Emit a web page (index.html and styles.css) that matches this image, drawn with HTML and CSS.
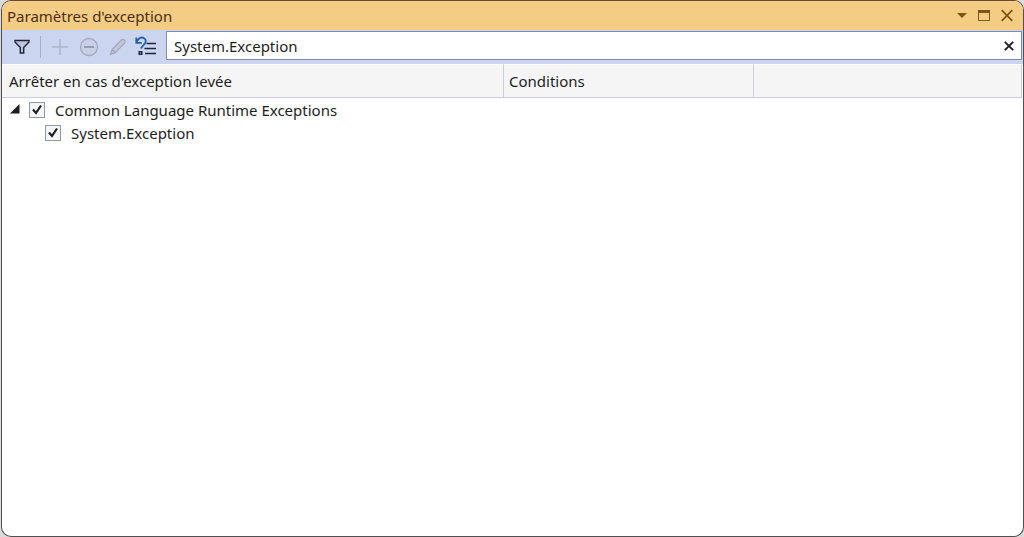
FILE: index.html
```html
<!DOCTYPE html>
<html lang="fr">
<head>
<meta charset="utf-8">
<title>Paramètres d'exception</title>
<link rel="stylesheet" href="styles.css">
</head>
<body>
<main class="window">
  <header class="titlebar">
    <h1 class="title">Paramètres d'exception</h1>
    <div class="window-actions">
      <button type="button" aria-label="Options de la fenêtre"><svg width="10" height="14" viewBox="0 0 10 14"><path d="M0 4h10L5 9z" fill="#805313"/></svg></button>
      <button type="button" aria-label="Agrandir"><svg width="12" height="14" viewBox="0 0 12 14"><path d="M.5 1.500h11v10H.5z" fill="none" stroke="#805313"/><path d="M0 1h12v3H0z" fill="#805313"/></svg></button>
      <button type="button" aria-label="Fermer"><svg width="12" height="14" viewBox="0 0 12 14"><path d="M.7 1.200l10.600 10.600M11.300 1.200L.7 11.800" stroke="#805313" stroke-width="1.700"/></svg></button>
    </div>
  </header>
  <div class="toolbar">
    <div class="tools">
      <button type="button" aria-label="Filtrer"><svg width="16" height="16" viewBox="0 0 16 16"><path d="M1 1.500h14V3L9.700 8.500V14H6.300V8.500L1 3z" fill="#bfc5d8" stroke="#20233a" stroke-width="1.400"/></svg></button>
      <span class="separator"></span>
      <button type="button" aria-label="Ajouter" disabled><svg width="18" height="18" viewBox="0 0 18 18"><path d="M9 1v16M1 9h16" stroke="#adb5cb" stroke-width="1.500"/></svg></button>
      <button type="button" aria-label="Supprimer" disabled><svg width="20" height="20" viewBox="0 0 20 20"><circle cx="10" cy="10" r="8.500" fill="#c8d0e8" stroke="#a4abc0" stroke-width="1.300"/><path d="M5 10h10" stroke="#969db2" stroke-width="1.800"/></svg></button>
      <button type="button" aria-label="Modifier" disabled><svg width="18" height="18" viewBox="0 0 18 18"><path d="M1.500 16.500l1.600-5L12.500 2c2-1.600 4.500.8 3.200 3L6.300 14.600zM3.100 11.500l3.200 3.100" fill="#c0c8df" stroke="#a1a8bc" stroke-width="1.300" stroke-linejoin="round"/></svg></button>
      <button type="button" aria-label="Restaurer les paramètres par défaut"><svg width="22" height="22" viewBox="0 0 22 22"><path d="M1.300 1.500v5.300h5.500M1.500 6.500C3.500 1.500 6.500.7 9 2.200c2.700 1.700 2 4.500 0 6.300L5.800 12.500" fill="none" stroke="#2461b5" stroke-width="1.800"/><path d="M4.200 15.700h2.600v2.600H4.200z" fill="#d5dbeb" stroke="#20233a" stroke-width="1.400"/><path d="M11.500 7.500H21M9.500 12.500H21M10 17.500H21" stroke="#20233a" stroke-width="1.300"/></svg></button>
    </div>
    <div class="search">
      <input type="text" aria-label="Rechercher" value="System.Exception">
      <button type="button" aria-label="Effacer la recherche"><svg width="10" height="10" viewBox="0 0 10 10"><path d="M.8.8l8.400 8.400M9.200.8L.8 9.200" stroke="#1e1e1e" stroke-width="1.900"/></svg></button>
    </div>
  </div>
  <table class="exceptions">
    <colgroup><col class="col-name"><col class="col-conditions"><col></colgroup>
    <thead><tr><th scope="col">Arrêter en cas d'exception levée</th><th scope="col">Conditions</th><th></th></tr></thead>
    <tbody>
      <tr><td colspan="3"><div class="node"><button type="button" class="expander" aria-label="Réduire" aria-expanded="true"><svg width="10" height="14" viewBox="0 0 10 14"><path d="M9.500 1v9.500H0z" fill="#1e1e1e"/></svg></button><label><input type="checkbox" checked>Common Language Runtime Exceptions</label></div></td></tr>
      <tr><td colspan="3"><div class="node child"><label><input type="checkbox" checked>System.Exception</label></div></td></tr>
    </tbody>
  </table>
</main>
</body>
</html>
```
FILE: styles.css
```css
* { box-sizing: border-box; }
body {
  margin: 0;
  background: #dcdcdc;
  color: #1e1e1e;
  font: 15px/20px "Noto Sans", "Open Sans", sans-serif;
}
button {
  display: flex;
  padding: 0;
  border: 0;
  background: none;
}
svg { display: block; }
.window {
  min-height: 100vh;
  margin-left: 1px;
  overflow: hidden;
  border: 1px solid #505052;
  border-top-color: #6b4a35;
  border-radius: 10px;
  background: #fff;
}
.titlebar {
  display: flex;
  align-items: center;
  justify-content: space-between;
  height: 29px;
  padding: 0 10px 0 5px;
  background: #f5cc84;
}
.title {
  margin: 0;
  color: #4a3013;
  font-size: 15px;
  font-weight: 400;
}
.window-actions {
  display: flex;
  align-items: center;
  gap: 11px;
}
.toolbar {
  display: flex;
  height: 34px;
  padding: 1px 1px 4px 0;
  background: #ccd5f0;
}
.tools {
  display: flex;
  flex: none;
  align-items: center;
  gap: 10px;
  width: 164px;
  padding: 2px 0 0 12px;
}
.tools button:last-child { margin-left: -2px; }
.separator {
  width: 1px;
  height: 22px;
  background: #a5afca;
}
.search {
  display: flex;
  flex: 1;
  align-items: center;
  padding: 0 7px;
  border: 1px solid #818cad;
  background: #fff;
}
.search input {
  flex: 1;
  min-width: 0;
  padding: 0;
  border: 0;
  outline: 0;
  background: none;
  color: #1e1e1e;
  font: inherit;
}
.exceptions {
  width: 100%;
  padding-right: 1px;
  border-collapse: separate;
  border-spacing: 0;
  table-layout: fixed;
}
.col-name { width: 502px; }
.col-conditions { width: 250px; }
.exceptions th {
  height: 34px;
  padding: 0 5px;
  border-top: 1px solid #fff;
  border-right: 1px solid #ccced8;
  border-bottom: 1px solid #ccced8;
  background: #f5f5f6;
  font-weight: 400;
  text-align: left;
}
.exceptions th:first-child { padding-left: 7px; }
.exceptions td { padding: 0; }
.node {
  display: flex;
  align-items: center;
  height: 23px;
  padding-left: 8px;
}
.child { padding-left: 43px; }
.expander { margin-right: 9px; }
.node label {
  display: flex;
  align-items: center;
  gap: 10px;
}
.node input {
  width: 16px;
  height: 16px;
  margin: 0;
  appearance: none;
  border: 1px solid #9298a8;
  background: #f4f5fa url("data:image/svg+xml,%3Csvg xmlns='http://www.w3.org/2000/svg' viewBox='0 0 14 14'%3E%3Cpath d='M3 6.500l3 3.500L11 2.500' fill='none' stroke='%231e1e1e' stroke-width='2.200'/%3E%3C/svg%3E") center / 14px no-repeat;
}
```
